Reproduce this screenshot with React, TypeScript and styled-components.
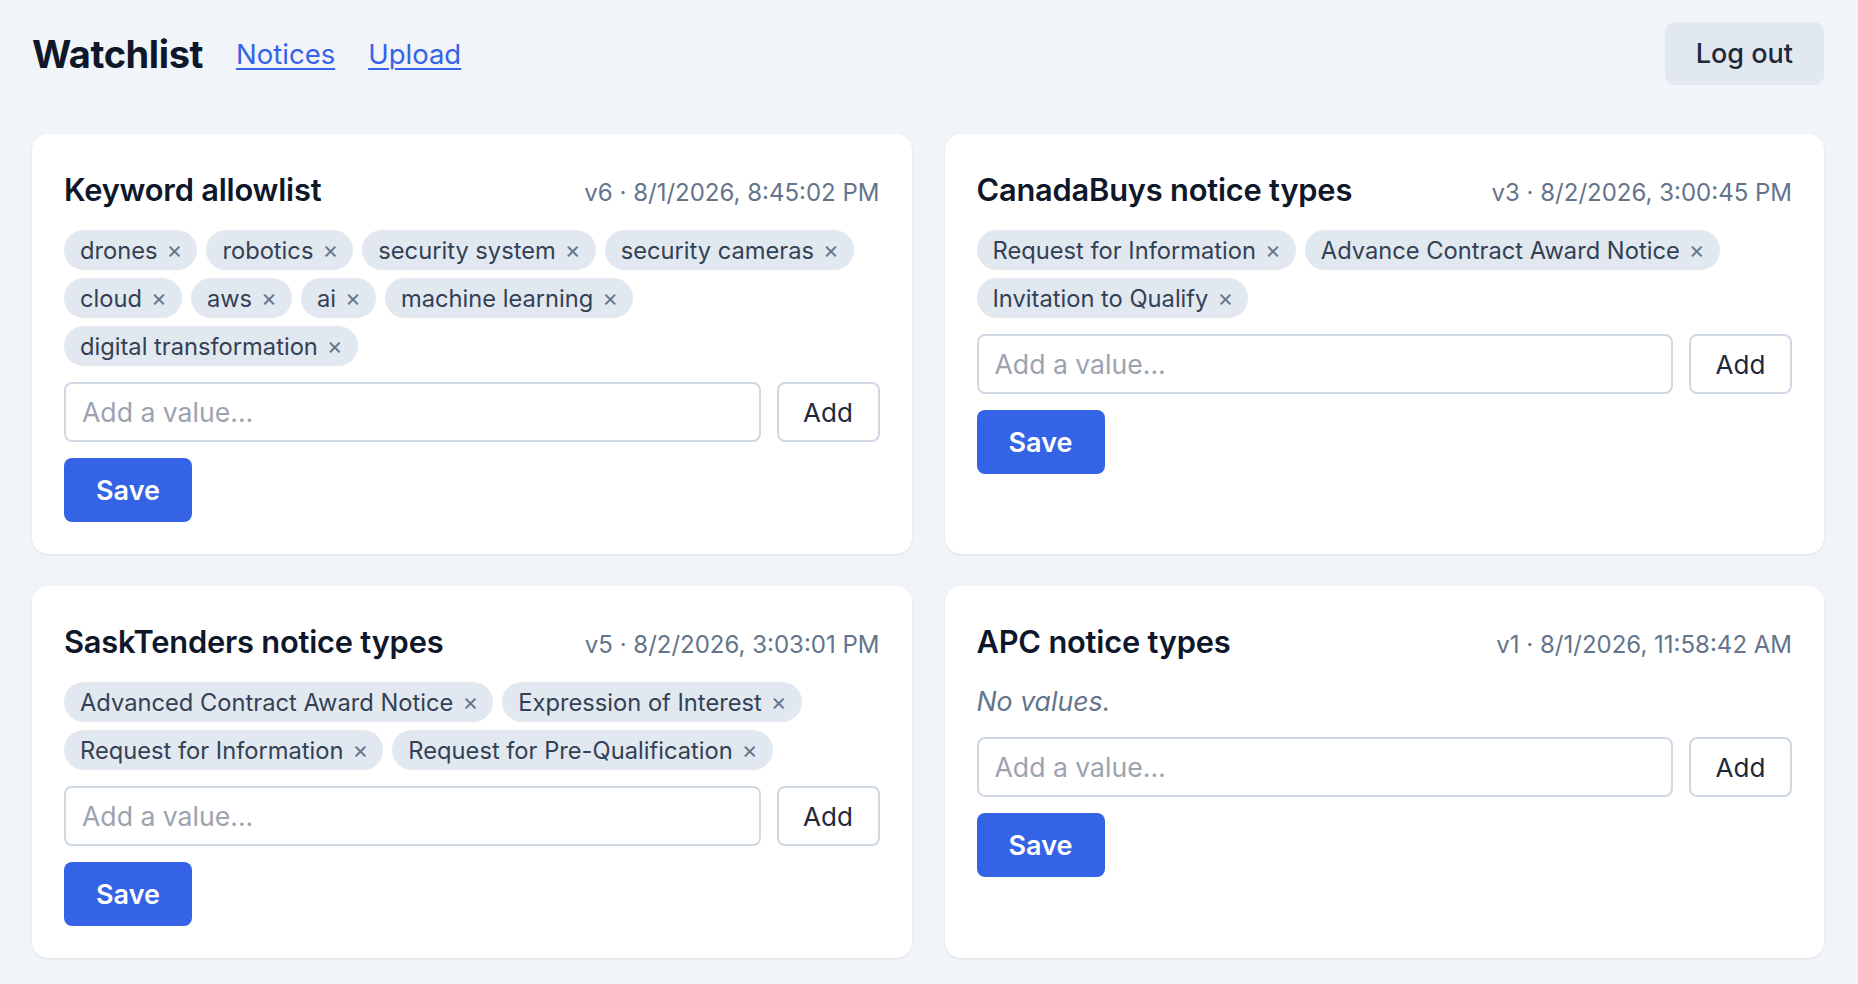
import React from "react";
import styled, { createGlobalStyle } from "styled-components";

const GlobalStyle = createGlobalStyle`
  * {
    box-sizing: border-box;
  }

  body {
    margin: 0;
    background: #f1f5f9;
    font-family: Inter, "Noto Sans", "Liberation Sans", sans-serif;
    color: #0f172a;
    -webkit-font-smoothing: antialiased;
  }
`;

interface ListCard {
  title: string;
  meta: string;
  values: string[];
}

const cards: ListCard[] = [
  {
    title: "Keyword allowlist",
    meta: "v6 · 8/1/2026, 8:45:02 PM",
    values: [
      "drones",
      "robotics",
      "security system",
      "security cameras",
      "cloud",
      "aws",
      "ai",
      "machine learning",
      "digital transformation",
    ],
  },
  {
    title: "CanadaBuys notice types",
    meta: "v3 · 8/2/2026, 3:00:45 PM",
    values: [
      "Request for Information",
      "Advance Contract Award Notice",
      "Invitation to Qualify",
    ],
  },
  {
    title: "SaskTenders notice types",
    meta: "v5 · 8/2/2026, 3:03:01 PM",
    values: [
      "Advanced Contract Award Notice",
      "Expression of Interest",
      "Request for Information",
      "Request for Pre-Qualification",
    ],
  },
  {
    title: "APC notice types",
    meta: "v1 · 8/1/2026, 11:58:42 AM",
    values: [],
  },
];

const Page = styled.div`
  padding: 22px 34px 28px 32px;
`;

const Header = styled.header`
  display: flex;
  align-items: center;
  justify-content: space-between;
  margin-bottom: 49px;
`;

const Nav = styled.nav`
  display: flex;
  align-items: center;
  gap: 33px;
`;

const Brand = styled.h1`
  margin: 0;
  font-size: 38px;
  font-weight: 700;
  letter-spacing: -0.4px;
  color: #0f172a;
`;

const NavLink = styled.a`
  font-size: 27.5px;
  color: #3563e9;
  text-decoration: underline;
  text-underline-offset: 4px;
  text-decoration-thickness: 2px;
  cursor: pointer;
`;

const LogoutButton = styled.button`
  height: 63px;
  padding: 0 31px;
  border: none;
  border-radius: 10px;
  background: #e2e8f0;
  color: #1e293b;
  font-family: inherit;
  font-size: 27px;
  font-weight: 500;
  cursor: pointer;
`;

const Grid = styled.main`
  display: grid;
  grid-template-columns: 1fr 1fr;
  gap: 32px 33px;
`;

const Card = styled.section`
  display: flex;
  flex-direction: column;
  gap: 16px;
  padding: 32px;
  background: #ffffff;
  border-radius: 16px;
  box-shadow: 0 1px 3px rgba(15, 23, 42, 0.06), 0 1px 2px rgba(15, 23, 42, 0.04);
`;

const CardHead = styled.div`
  display: flex;
  align-items: baseline;
  justify-content: space-between;
`;

const CardTitle = styled.h2`
  margin: 0;
  font-size: 30.8px;
  line-height: 48px;
  font-weight: 600;
  letter-spacing: -0.2px;
  color: #0f172a;
`;

const Meta = styled.span`
  font-size: 24px;
  color: #64748b;
`;

const Tags = styled.div`
  display: flex;
  flex-wrap: wrap;
  gap: 8px 9px;
`;

const Tag = styled.span`
  display: inline-flex;
  align-items: center;
  gap: 9px;
  height: 40px;
  padding: 0 15px 0 16px;
  border-radius: 999px;
  background: #e2e8f0;
  color: #334155;
  font-size: 23.7px;
`;

const RemoveButton = styled.button`
  padding: 0;
  border: none;
  background: none;
  color: #64748b;
  font-family: inherit;
  font-size: 24px;
  line-height: 1;
  cursor: pointer;
`;

const Empty = styled.p`
  margin: 0;
  font-size: 26.7px;
  line-height: 39px;
  font-style: italic;
  color: #64748b;
`;

const AddRow = styled.div`
  display: flex;
  gap: 16px;
  height: 60px;
`;

const ValueInput = styled.input`
  flex: 1;
  min-width: 0;
  padding: 0 16px;
  border: 2px solid #cfd8e3;
  border-radius: 8px;
  background: #ffffff;
  font-family: inherit;
  font-size: 26.6px;
  color: #0f172a;
  outline: none;

  &::placeholder {
    color: #9ca3af;
  }
`;

const AddButton = styled.button`
  width: 103px;
  border: 2px solid #cfd8e3;
  border-radius: 8px;
  background: #ffffff;
  color: #1e293b;
  font-family: inherit;
  font-size: 26px;
  cursor: pointer;
`;

const SaveButton = styled.button`
  align-self: flex-start;
  width: 128px;
  height: 64px;
  border: none;
  border-radius: 8px;
  background: #3563e5;
  color: #ffffff;
  font-family: inherit;
  font-size: 27px;
  font-weight: 600;
  cursor: pointer;
`;

function WatchCard({ title, meta, values }: ListCard) {
  return (
    <Card>
      <CardHead>
        <CardTitle>{title}</CardTitle>
        <Meta>{meta}</Meta>
      </CardHead>
      {values.length > 0 ? (
        <Tags>
          {values.map((v) => (
            <Tag key={v}>
              {v}
              <RemoveButton aria-label={`Remove ${v}`}>×</RemoveButton>
            </Tag>
          ))}
        </Tags>
      ) : (
        <Empty>No values.</Empty>
      )}
      <AddRow>
        <ValueInput placeholder="Add a value..." />
        <AddButton>Add</AddButton>
      </AddRow>
      <SaveButton>Save</SaveButton>
    </Card>
  );
}

export default function App() {
  return (
    <>
      <GlobalStyle />
      <Page>
        <Header>
          <Nav>
            <Brand>Watchlist</Brand>
            <NavLink>Notices</NavLink>
            <NavLink>Upload</NavLink>
          </Nav>
          <LogoutButton>Log out</LogoutButton>
        </Header>
        <Grid>
          {cards.map((c) => (
            <WatchCard key={c.title} {...c} />
          ))}
        </Grid>
      </Page>
    </>
  );
}
